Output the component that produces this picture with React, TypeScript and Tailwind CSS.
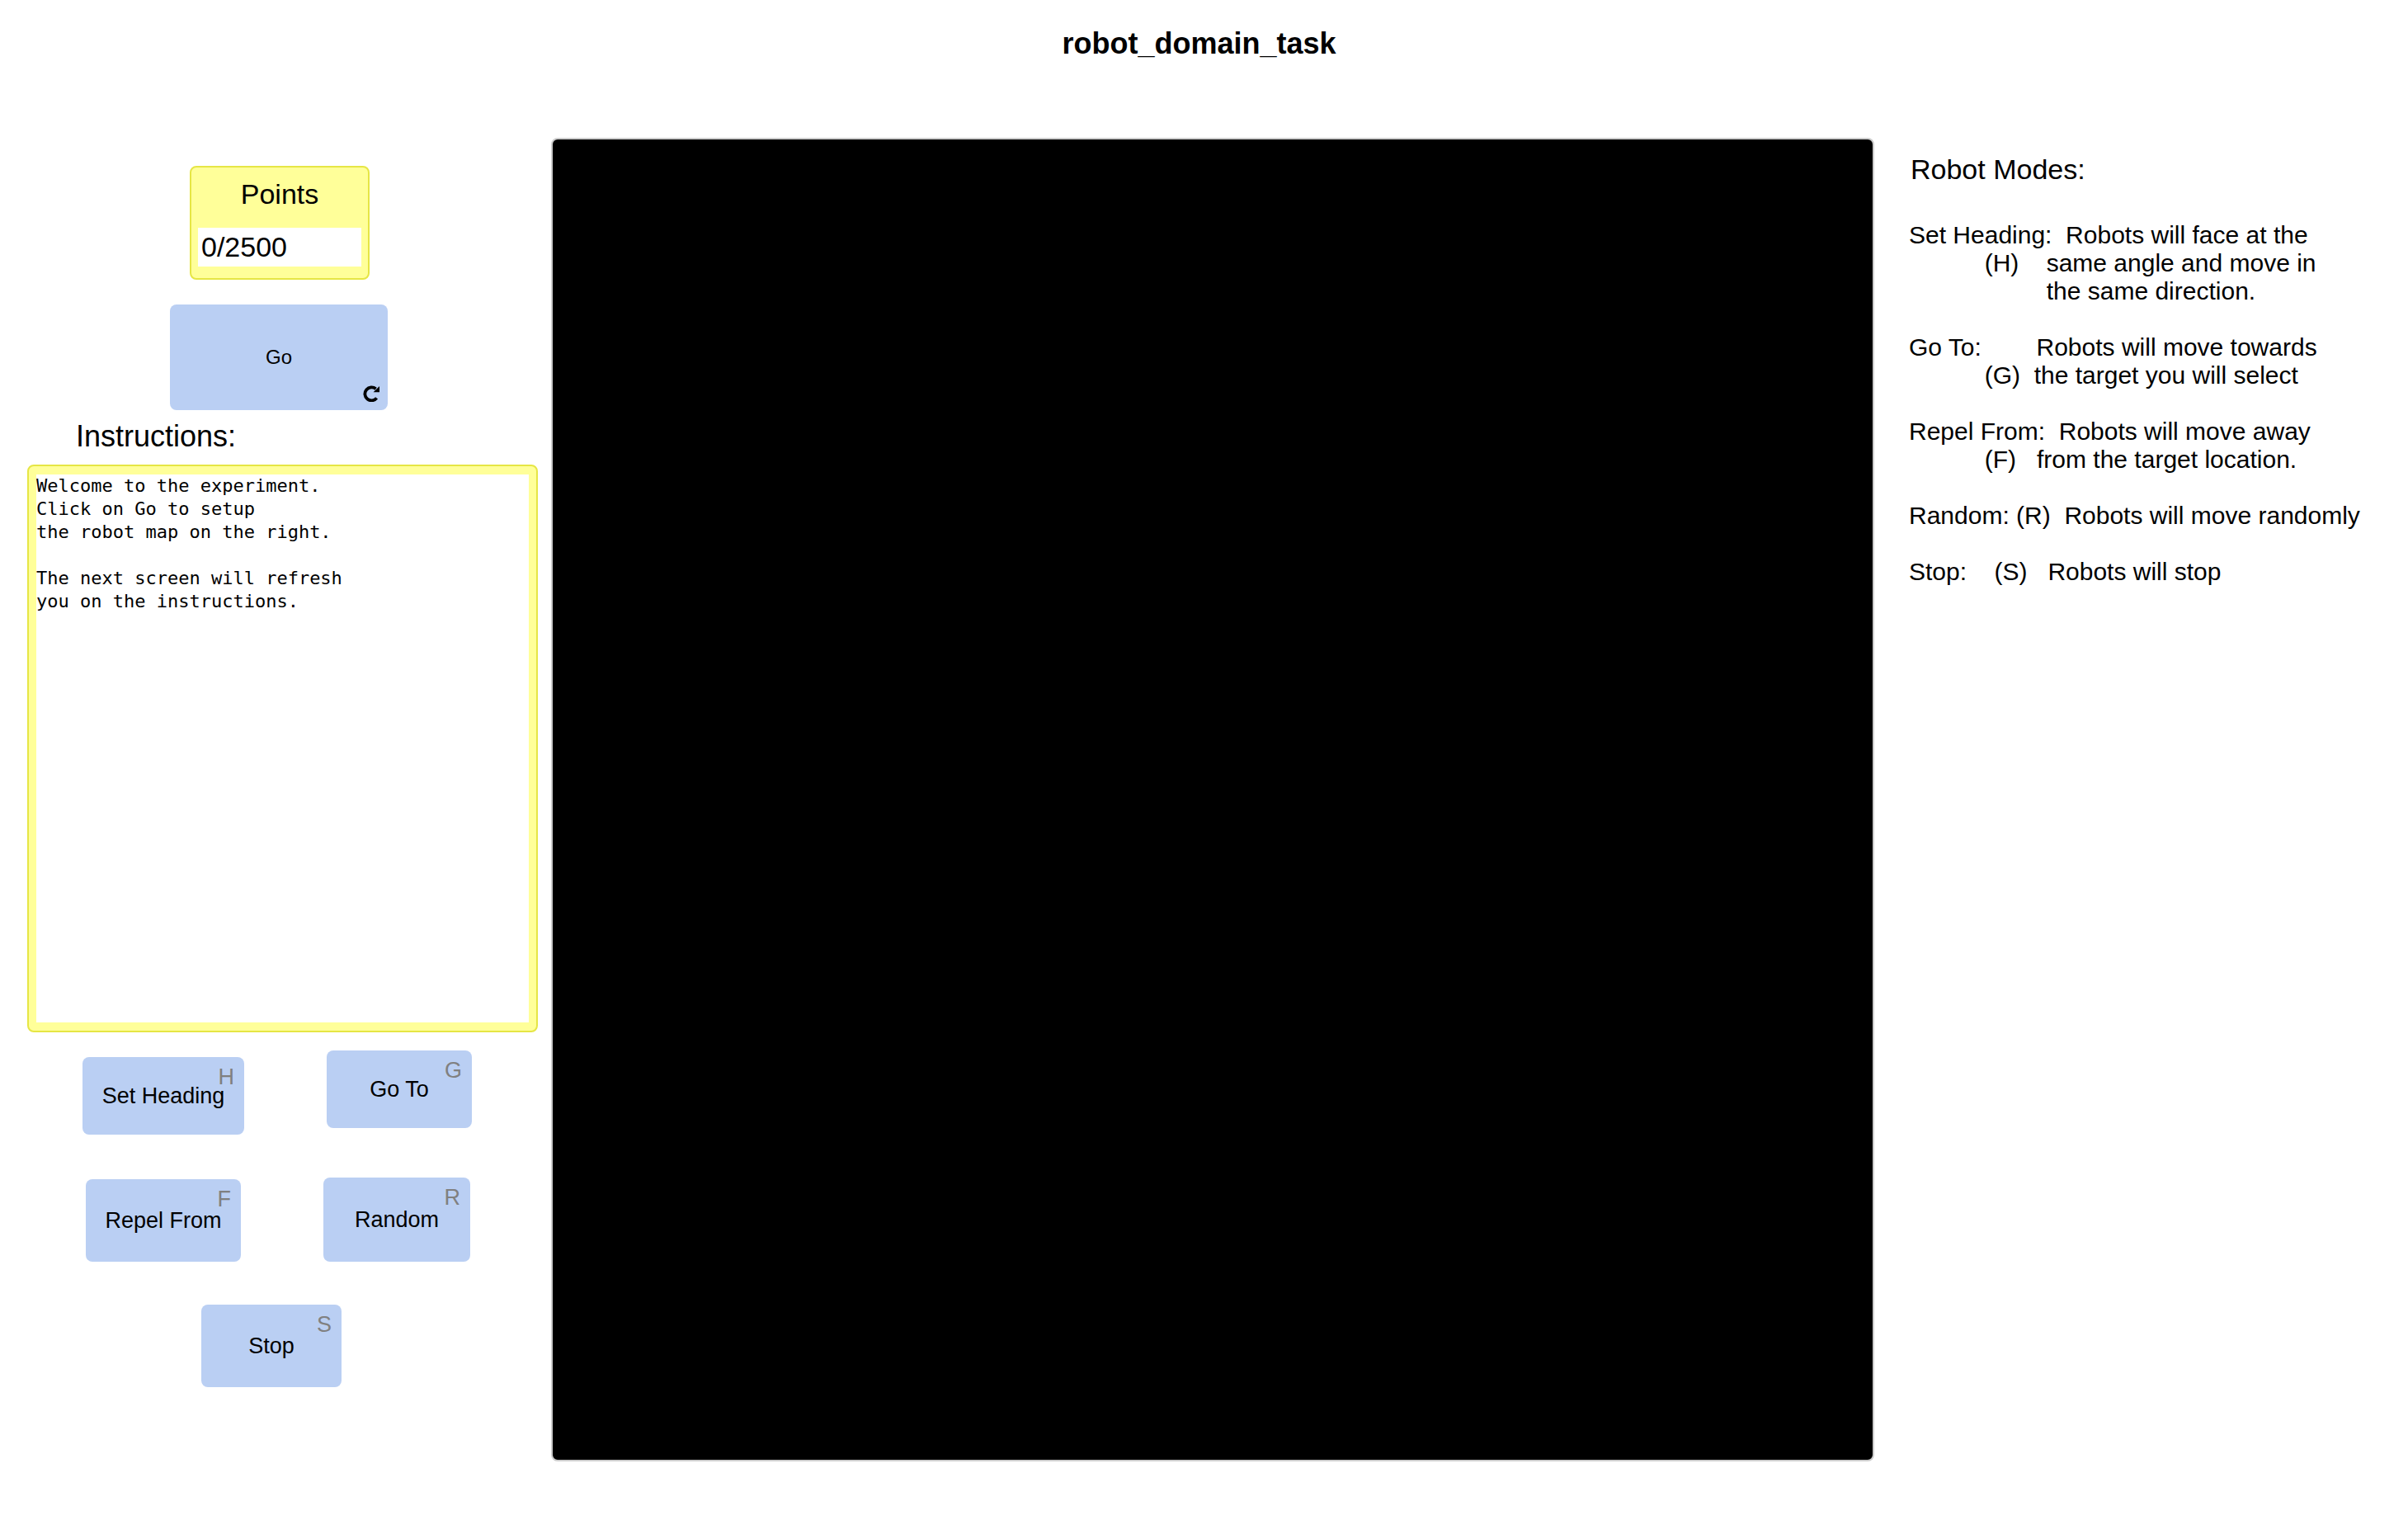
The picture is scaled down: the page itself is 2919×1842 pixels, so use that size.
import React from "react";

const MODES = [
  "Set Heading:  Robots will face at the",
  "           (H)    same angle and move in",
  "                    the same direction.",
  "",
  "Go To:        Robots will move towards",
  "           (G)  the target you will select",
  "",
  "Repel From:  Robots will move away",
  "           (F)   from the target location.",
  "",
  "Random: (R)  Robots will move randomly",
  "",
  "Stop:    (S)   Robots will stop",
].join("\n");

const INSTRUCTIONS = [
  "Welcome to the experiment.",
  "Click on Go to setup",
  "the robot map on the right.",
  "",
  "The next screen will refresh",
  "you on the instructions.",
].join("\n");

function ModeButton({ label, hotkey, size }: { label: string; hotkey: string; size: string }) {
  return (
    <button
      type="button"
      className={`relative flex items-center justify-center rounded-lg bg-[#bacff3] text-[27px] leading-8 text-black ${size}`}
    >
      {label}
      <span className="absolute top-2 right-3 text-[#808080]">{hotkey}</span>
    </button>
  );
}

function ForeverIcon() {
  return (
    <svg viewBox="0 0 20 20" className="absolute right-[10px] bottom-[10px] size-5" aria-hidden="true">
      <path d="M16.6 15.4A8 8 0 1 1 15.6 4.3" fill="none" stroke="black" strokeWidth="3.8" />
      <path d="M20 1V8.3H12.6Z" fill="black" />
    </svg>
  );
}

export default function App() {
  return (
    <div className="min-h-screen bg-white font-['Liberation_Sans',Arial,sans-serif] text-black">
      <h1 className="pt-[33px] pr-3 pb-[94px] text-center text-[36px] leading-10 font-bold">
        robot_domain_task
      </h1>
      <main className="grid grid-cols-[668px_minmax(0,1fr)_647px] items-start">
        <section className="flex flex-col pt-[34px] pr-4 pl-[33px]" aria-label="Controls">
          <div className="ml-[197px] flex h-[138px] w-[218px] flex-col rounded-lg border-2 border-[#e6e645] bg-[#ffff99] px-2">
            <label htmlFor="points" className="pt-3 text-center text-[34px] leading-10">
              Points
            </label>
            <output id="points" className="mt-[21px] bg-white px-1 text-[34px] leading-[47px]">
              0/2500
            </output>
          </div>
          <button
            type="button"
            className="relative mt-[30px] ml-[173px] h-32 w-[264px] rounded-lg bg-[#bacff3] text-[24px]"
          >
            Go
            <ForeverIcon />
          </button>
          <label htmlFor="instructions" className="mt-3 ml-[59px] text-[36px] leading-10">
            Instructions:
          </label>
          <div className="mt-[14px] rounded-lg border-2 border-[#e6e645] bg-[#ffff99] px-[9px] py-[10px]">
            <textarea
              id="instructions"
              readOnly
              value={INSTRUCTIONS}
              className="block h-[664px] w-full resize-none bg-white font-['DejaVu_Sans_Mono',monospace] text-[22px] leading-7 outline-none"
            />
          </div>
          <div className="mt-[22px] ml-[67px] flex gap-24">
            <div className="flex flex-col items-center gap-[54px] pt-2">
              <ModeButton label="Set Heading" hotkey="H" size="h-[94px] w-[196px]" />
              <ModeButton label="Repel From" hotkey="F" size="h-[100px] w-[188px]" />
            </div>
            <div className="flex flex-col items-start gap-[60px]">
              <ModeButton label="Go To" hotkey="G" size="ml-1 h-[94px] w-[176px]" />
              <ModeButton label="Random" hotkey="R" size="h-[102px] w-[178px]" />
            </div>
          </div>
          <div className="mt-[52px] ml-[211px]">
            <ModeButton label="Stop" hotkey="S" size="h-[100px] w-[170px]" />
          </div>
        </section>
        <div
          role="img"
          aria-label="Robot map"
          className="aspect-square rounded-lg border-2 border-[#cccccc] bg-black"
        />
        <section className="pt-[18px] pl-[42px]" aria-labelledby="modes">
          <h2 id="modes" className="pl-[2px] text-[34px] leading-10">
            Robot Modes:
          </h2>
          <p className="mt-[43px] text-[30px] leading-[34px] whitespace-pre">{MODES}</p>
        </section>
      </main>
    </div>
  );
}
